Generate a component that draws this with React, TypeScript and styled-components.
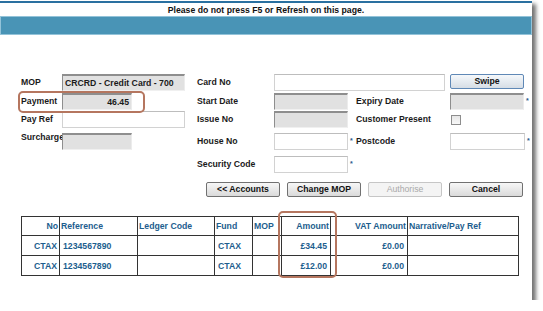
import React from "react";
import styled, { createGlobalStyle, css } from "styled-components";

const FONT = `"Liberation Sans", Arial, sans-serif`;

const GlobalStyle = createGlobalStyle`
  html, body { margin: 0; padding: 0; background: #ffffff; }
  body { font-family: ${FONT}; }
  * { box-sizing: border-box; }
`;

const Window = styled.div`
  position: relative;
  width: 532px;
  height: 300px;
  background: #ffffff;
  box-shadow: 4px 4px 4px rgba(0, 0, 0, 0.55);
  display: flex;
  flex-direction: column;
  font-size: 8.7px;
  font-weight: bold;
  color: #1a1a1a;
`;

const TopRule = styled.div`
  height: 2px;
  margin-top: 1px;
  background: #2a70a0;
`;

const Notice = styled.div`
  height: 13px;
  line-height: 14px;
  text-align: center;
  color: #111;
`;

const Bar = styled.div`
  height: 19px;
  background: #4994b6;
  border: 1px solid #93c3d9;
`;

const FormGrid = styled.div`
  margin-top: 39px;
  padding-left: 21px;
  display: grid;
  grid-template-columns: 41px 123px 12px 77px 82px 94px 82px;
  grid-template-rows: 19px 18px 22px 23px 17px;
`;

const Cell = styled.div<{ $col: string; $row: number }>`
  grid-column: ${(p) => p.$col};
  grid-row: ${(p) => p.$row};
  display: flex;
  align-items: flex-start;
  height: 17px;
`;

const Label = styled.span<{ $top?: boolean }>`
  white-space: nowrap;
  line-height: ${(p) => (p.$top ? "10px" : "17px")};
  ${(p) => p.$top && css`margin-top: -1px;`}
`;

const GrayField = styled.div<{ $w: number; $right?: boolean }>`
  width: ${(p) => p.$w}px;
  height: 17px;
  background: #e1e1e1;
  border-top: 2px solid #8e8e8e;
  border-left: 1px solid #8e8e8e;
  border-right: 1px solid #ececec;
  border-bottom: 1px solid #f0f0f0;
  line-height: 14px;
  padding: 0 2px;
  white-space: nowrap;
  overflow: hidden;
  text-align: ${(p) => (p.$right ? "right" : "left")};
`;

const WhiteField = styled.div<{ $w: number }>`
  width: ${(p) => p.$w}px;
  height: 17px;
  background: #ffffff;
  border: 1px solid #d2d2d2;
  border-top-color: #bdbdbd;
`;

const Star = styled.span`
  color: #2a5a8a;
  font-size: 7px;
  line-height: 7px;
  margin: 4px 0 0 2px;
`;

const CheckBox = styled.span`
  width: 10px;
  height: 10px;
  margin: 4px 0 0 1px;
  border: 1px solid #8d8d8d;
  background: linear-gradient(#e6e6e6, #f8f8f8);
`;

const Button = styled.button<{ $variant?: "swipe" | "disabled" }>`
  width: 74px;
  height: 15px;
  padding: 0;
  border: 1px solid #717171;
  border-radius: 2px;
  background: linear-gradient(#f7f7f7, #dadada);
  font-family: ${FONT};
  font-size: 8.7px;
  font-weight: bold;
  color: #111;
  line-height: 13px;
  ${(p) =>
    p.$variant === "swipe" &&
    css`
      border-color: #5f88b6;
      background: linear-gradient(#f5f8fb, #d6dde5);
    `}
  ${(p) =>
    p.$variant === "disabled" &&
    css`
      border-color: #c6c6c6;
      background: #f4f4f4;
      color: #a9a9a9;
      font-weight: normal;
    `}
`;

const ButtonRow = styled.div`
  margin-top: 9px;
  padding-right: 9px;
  display: flex;
  justify-content: flex-end;
  gap: 7px;
`;

const Table = styled.table`
  margin: 19px 0 0 21px;
  width: 497px;
  border-collapse: collapse;
  table-layout: fixed;
  color: #1d5e8e;
`;

const Th = styled.th<{ $w: number; $align?: "left" | "right" }>`
  width: ${(p) => p.$w}px;
  height: 19px;
  border: 1px solid #333333;
  padding: 0 1px;
  font-weight: bold;
  white-space: nowrap;
  overflow: hidden;
  text-align: ${(p) => p.$align ?? "left"};
`;

const Td = styled.td<{ $align?: "left" | "right"; $pad?: number }>`
  height: 20px;
  border: 1px solid #333333;
  padding: 0 ${(p) => p.$pad ?? 2}px;
  white-space: nowrap;
  text-align: ${(p) => p.$align ?? "left"};
`;

const Highlight = styled.div<{ $x: number; $y: number; $w: number; $h: number }>`
  position: absolute;
  left: ${(p) => p.$x}px;
  top: ${(p) => p.$y}px;
  width: ${(p) => p.$w}px;
  height: ${(p) => p.$h}px;
  border: 2px solid #b5765f;
  border-radius: 5px;
  pointer-events: none;
`;

const rows = [
  { no: "CTAX", ref: "1234567890", fund: "CTAX", amount: "£34.45", vat: "£0.00" },
  { no: "CTAX", ref: "1234567890", fund: "CTAX", amount: "£12.00", vat: "£0.00" },
];

export default function App() {
  return (
    <>
      <GlobalStyle />
      <Window>
        <TopRule />
        <Notice>Please do not press F5 or Refresh on this page.</Notice>
        <Bar />
        <FormGrid>
          <Cell $col="1" $row={1}><Label>MOP</Label></Cell>
          <Cell $col="2" $row={1}><GrayField $w={123}>CRCRD - Credit Card - 700</GrayField></Cell>
          <Cell $col="4" $row={1}><Label>Card No</Label></Cell>
          <Cell $col="5 / 7" $row={1}><WhiteField $w={171} /></Cell>
          <Cell $col="7" $row={1}><Button $variant="swipe">Swipe</Button></Cell>

          <Cell $col="1" $row={2}><Label>Payment</Label></Cell>
          <Cell $col="2" $row={2}><GrayField $w={70} $right>46.45</GrayField></Cell>
          <Cell $col="4" $row={2}><Label>Start Date</Label></Cell>
          <Cell $col="5" $row={2}><GrayField $w={74} /></Cell>
          <Cell $col="6" $row={2}><Label>Expiry Date</Label></Cell>
          <Cell $col="7" $row={2}><GrayField $w={74} /><Star>*</Star></Cell>

          <Cell $col="1" $row={3}><Label>Pay Ref</Label></Cell>
          <Cell $col="2" $row={3}><WhiteField $w={123} /></Cell>
          <Cell $col="4" $row={3}><Label>Issue No</Label></Cell>
          <Cell $col="5" $row={3}><GrayField $w={74} /></Cell>
          <Cell $col="6" $row={3}><Label>Customer Present</Label></Cell>
          <Cell $col="7" $row={3}><CheckBox /></Cell>

          <Cell $col="1" $row={4}><Label $top>Surcharge</Label></Cell>
          <Cell $col="2" $row={4}><GrayField $w={70} /></Cell>
          <Cell $col="4" $row={4}><Label>House No</Label></Cell>
          <Cell $col="5" $row={4}><WhiteField $w={74} /><Star>*</Star></Cell>
          <Cell $col="6" $row={4}><Label>Postcode</Label></Cell>
          <Cell $col="7" $row={4}><WhiteField $w={75} /><Star>*</Star></Cell>

          <Cell $col="4" $row={5}><Label>Security Code</Label></Cell>
          <Cell $col="5" $row={5}><WhiteField $w={74} /><Star>*</Star></Cell>
        </FormGrid>

        <ButtonRow>
          <Button>&lt;&lt; Accounts</Button>
          <Button>Change MOP</Button>
          <Button $variant="disabled">Authorise</Button>
          <Button>Cancel</Button>
        </ButtonRow>

        <Table>
          <thead>
            <tr>
              <Th $w={38} $align="right">No</Th>
              <Th $w={78}>Reference</Th>
              <Th $w={77}>Ledger Code</Th>
              <Th $w={38}>Fund</Th>
              <Th $w={29}>MOP</Th>
              <Th $w={49} $align="right">Amount</Th>
              <Th $w={77} $align="right">VAT Amount</Th>
              <Th $w={111}>Narrative/Pay Ref</Th>
            </tr>
          </thead>
          <tbody>
            {rows.map((r, i) => (
              <tr key={i}>
                <Td $align="right">{r.no}</Td>
                <Td $pad={3}>{r.ref}</Td>
                <Td />
                <Td $pad={3}>{r.fund}</Td>
                <Td />
                <Td $align="right" $pad={3}>{r.amount}</Td>
                <Td $align="right" $pad={3}>{r.vat}</Td>
                <Td />
              </tr>
            ))}
          </tbody>
        </Table>

        <Highlight $x={18} $y={91} $w={127} $h={22} />
        <Highlight $x={278} $y={211} $w={59} $h={67} />
      </Window>
    </>
  );
}
